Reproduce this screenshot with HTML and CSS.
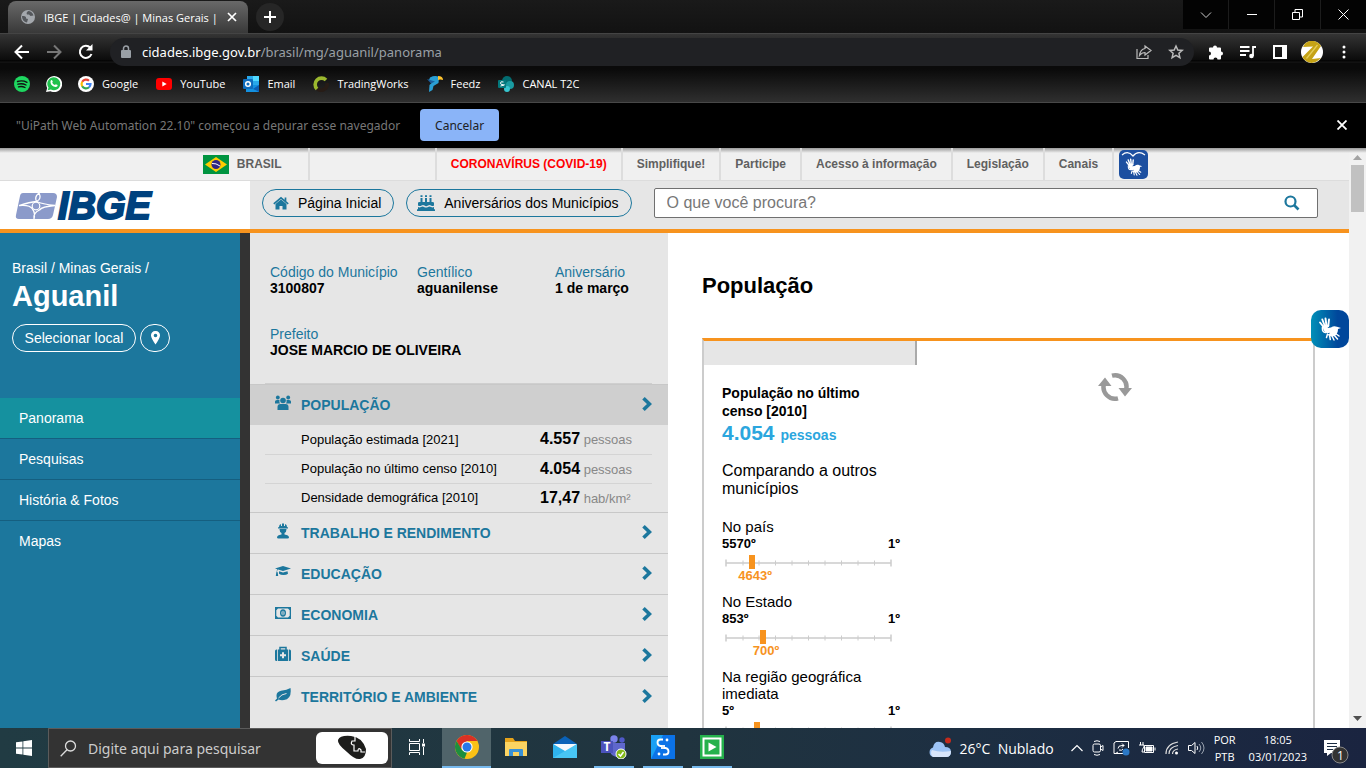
FILE: index.html
```html
<!DOCTYPE html>
<html lang="pt-BR">
<head>
<meta charset="utf-8">
<title>IBGE | Cidades@ | Minas Gerais | Aguanil</title>
<link rel="stylesheet" href="styles.css">
</head>
<body>
<svg class="defs" aria-hidden="true">
  <symbol id="hands" viewBox="0 0 24 24">
    <g fill="none" stroke="currentColor" stroke-linecap="round" stroke-linejoin="round">
      <path stroke-width="1.900" d="M6 10.500 2 5.500M7 9.500 4.300 2.500M8.500 9 7.500 1.500M10.300 9 11 2.500"/>
      <path stroke-width="1.500" d="M4.500 10C4 14 5.500 16 8 15.500M14 19l2 4M11.500 18l.8 4.500M16 18l3.500 4M17.500 16.500l3.500 2.500M9.500 17 8.500 20.500"/>
    </g>
    <path fill="currentColor" d="M5 10.500C6 8.500 9 7.800 11.500 8.500l-2 2.500 3.500-.5c2-1.500 4-1.800 6-.7l4 1.200-3 1c0 3-1 5.500-3.500 7-2.500 1-5.500 0-7.500-1.500 1.500-.2 2.500-.8 3-1.800-2 .8-4 .3-5-.8C5.500 13.500 5 12 5 10.500Z"/>
  </symbol>
  <symbol id="chev" viewBox="0 0 10 14"><path d="m1.500 1.300 6 5.700-6 5.700" fill="none" stroke="currentColor" stroke-width="3.600"/></symbol>
  <symbol id="scale" viewBox="0 0 167 14"><path d="M1 8h165M1 4.500v7M166 4.500v7" stroke="#ccc" stroke-width="1.500" fill="none"/><path d="M18 5.500v5M34 5.500v5M50.500 5.500v5M67 5.500v5M83.500 5.500v5M100 5.500v5M116.500 5.500v5M133 5.500v5M149.500 5.500v5" stroke="#ccc"/></symbol>
</svg>

<header class="browser">
  <div class="tabstrip">
    <div class="tab">
      <svg width="16" height="16" viewBox="0 0 16 16"><circle cx="8" cy="8" r="7" fill="#a4a8ad"/><path d="M2 7c3 0 4.500.5 4 2.500l2 .5-1 3.500C4 13 2 10.500 2 7ZM8 2c2.500 0 5 2 5.500 4.500l-3 .5-1.500-1.500H7L6.500 4Z" fill="#55585c"/></svg>
      <span class="tab-title">IBGE | Cidades@ | Minas Gerais |</span>
      <button class="ico" aria-label="Fechar guia"><svg width="10" height="10" viewBox="0 0 10 10"><path d="m1 1 8 8M9 1 1 9" stroke="#fff" stroke-width="1.700"/></svg></button>
    </div>
    <button class="newtab" aria-label="Nova guia"><svg width="12" height="12" viewBox="0 0 12 12"><path d="M6 0v12M0 6h12" stroke="#fff" stroke-width="2"/></svg></button>
    <div class="winbtns">
      <button aria-label="Pesquisar guias"><svg width="12" height="8" viewBox="0 0 12 8"><path d="m1 1.500 5 5 5-5" fill="none" stroke="#ccc"/></svg></button>
      <button aria-label="Minimizar"><svg width="10" height="10" viewBox="0 0 10 10"><path d="M0 4.500h10" stroke="#fff"/></svg></button>
      <button aria-label="Restaurar"><svg width="11" height="11" viewBox="0 0 11 11"><path d="M.5 3.500h7v7h-7zM3 3V.5h7.500V8H8" fill="none" stroke="#fff"/></svg></button>
      <button aria-label="Fechar"><svg width="11" height="11" viewBox="0 0 11 11"><path d="m.5.5 10 10M10.500.5l-10 10" stroke="#fff"/></svg></button>
    </div>
  </div>
  <div class="toolbar">
    <button class="ico" aria-label="Voltar"><svg width="16" height="16" viewBox="0 0 16 16"><path d="M15 8H2M8 1.500 1.500 8 8 14.500" fill="none" stroke="#fff" stroke-width="2"/></svg></button>
    <button class="ico" aria-label="Avançar"><svg width="16" height="16" viewBox="0 0 16 16"><path d="M1 8h13M8 1.500 14.500 8 8 14.500" fill="none" stroke="#777" stroke-width="2"/></svg></button>
    <button class="ico" aria-label="Recarregar"><svg width="16" height="16" viewBox="0 0 16 16"><path d="M13.500 10A6 6 0 1 1 12.300 3.800" fill="none" stroke="#fff" stroke-width="2"/><path d="M14.500 0v6.500H8Z" fill="#fff"/></svg></button>
    <div class="omnibox">
      <svg width="10" height="14" viewBox="0 0 10 14"><path d="M1 5h8q1 0 1 1v6q0 1-1 1H1q-1 0-1-1V6q0-1 1-1Z" fill="#9aa0a6"/><path d="M2.500 5.500V3.500a2.500 2.500 0 0 1 5 0v2" fill="none" stroke="#9aa0a6" stroke-width="1.500"/></svg>
      <span class="url"><b>cidades.ibge.gov.br</b>/brasil/mg/aguanil/panorama</span>
      <button class="ico" aria-label="Compartilhar"><svg width="16" height="16" viewBox="0 0 16 16"><path d="M1 5v9.500h11V11M9 2l6 4.500L9 11V8.500C6 8.500 5 9.500 3.500 11.500 4 7.500 6 5 9 4.500Z" fill="none" stroke="#bbb" stroke-width="1.200"/></svg></button>
      <button class="ico" aria-label="Favoritar"><svg width="16" height="16" viewBox="0 0 16 16"><path d="m8 2 1.800 4 4.400.4-3.300 2.900 1 4.300L8 11.300l-3.900 2.300 1-4.300L1.800 6.400 6.200 6Z" fill="none" stroke="#bbb" stroke-width="1.500"/></svg></button>
    </div>
    <div class="tools">
      <button class="ico" aria-label="Extensões"><svg width="16" height="16" viewBox="0 0 16 16"><path d="M1 4.500q0-1 1-1h3a2 2 0 1 1 4 0h3q1 0 1 1v3a2 2 0 1 1 0 4v3q0 1-1 1H9.500a2 2 0 0 0-4 0H2q-1 0-1-1v-3a2 2 0 0 0 0-4Z" fill="#fff"/></svg></button>
      <button class="ico" aria-label="Mídia"><svg width="16" height="16" viewBox="0 0 16 16"><path d="M0 3h9.500M0 7h9.500M0 11h6M13 12V3h3" fill="none" stroke="#fff" stroke-width="1.800"/><circle cx="11.500" cy="12" r="2.300" fill="#fff"/></svg></button>
      <button class="ico" aria-label="Painel lateral"><svg width="14" height="14" viewBox="0 0 14 14"><path d="M0 0h14v14H0Zm2 2v10h7V2Z" fill="#fff" fill-rule="evenodd"/></svg></button>
      <button class="ico" aria-label="Perfil"><svg width="22" height="22" viewBox="0 0 22 22"><circle cx="11" cy="11" r="11" fill="#fff"/><path d="M4 2.500Q11-3 18 2.500L20 5 11 18l9-1Q11 26 3 18.500L1.500 16 12 5.500 2 6Z" fill="#c5a316"/><path d="M16.500 4 5.500 17.500" stroke="#e6cf5a" stroke-width="1.200"/></svg></button>
      <button class="ico" aria-label="Menu"><svg width="16" height="16" viewBox="0 0 16 16" fill="#fff"><circle cx="8" cy="3" r="1.500"/><circle cx="8" cy="8" r="1.500"/><circle cx="8" cy="13" r="1.500"/></svg></button>
    </div>
  </div>
  <nav class="bookmarks">
    <a href="#" aria-label="Spotify"><svg width="16" height="16" viewBox="0 0 16 16"><circle cx="8" cy="8" r="8" fill="#1ed760"/><path d="M3.500 5.500q5-1.500 9.500.8M4 8.200q4.200-1.200 8 .8M4.500 10.800q3.500-1 6.500.7" fill="none" stroke="#111" stroke-width="1.400" stroke-linecap="round"/></svg></a>
    <a href="#" aria-label="WhatsApp"><svg width="16" height="16" viewBox="0 0 16 16"><path d="m0 16 1.200-4A8 8 0 1 1 4.500 15.200Z" fill="#fff"/><path d="m1.700 14.300.8-2.700a6.500 6.500 0 1 1 2.300 2Z" fill="#1fc14d"/><path d="M5 4.200q1-.5 1.500.8l.3.800-.6.900q1 1.800 2.700 2.400l.9-.9 1.900.9q0 2-2 2Q5 10.300 4.500 6.500 4.300 5 5 4.200Z" fill="#fff"/></svg></a>
    <a href="#"><svg width="16" height="16" viewBox="0 0 16 16"><circle cx="8" cy="8" r="8" fill="#fff"/><g fill="none" stroke-width="2.200"><path d="M11 4.700A4.400 4.400 0 0 0 4.200 5.800" stroke="#ea4335"/><path d="M4.200 5.700a4.400 4.400 0 0 0 0 4.600" stroke="#fbbc05"/><path d="M4.200 10.200A4.400 4.400 0 0 0 11 11.300" stroke="#34a853"/><path d="M11 11.300Q12.500 10 12.500 8H8" stroke="#4285f4"/></g></svg><span>Google</span></a>
    <a href="#"><svg width="16" height="16" viewBox="0 0 16 16"><rect y="2" width="16" height="12" rx="3" fill="#f00"/><path d="m6.300 5.500 4.400 2.500-4.400 2.500Z" fill="#fff"/></svg><span>YouTube</span></a>
    <a href="#"><svg width="16" height="16" viewBox="0 0 16 16"><path d="M4 0h12v9H4Z" fill="#28a8ea"/><path d="M10 0h6v5h-6Z" fill="#50d9ff"/><path d="M3 9h13v7H3Z" fill="#1490df"/><path d="m3 9 7 4 6-4v7Z" fill="#0a5eb5"/><rect y="3" width="10" height="10" rx="1" fill="#0f6cbd"/><circle cx="5" cy="8" r="2.300" fill="none" stroke="#fff" stroke-width="1.500"/></svg><span>Email</span></a>
    <a href="#"><svg width="16" height="16" viewBox="0 0 16 16" fill="none" stroke-width="3.600"><path d="M14 7a6 6 0 0 1-10 5.500" stroke="#271c16"/><path d="M4 13A6.200 6.200 0 0 1 13 4" stroke="#9bb82e"/></svg><span>TradingWorks</span></a>
    <a href="#"><svg width="16" height="16" viewBox="0 0 16 16"><path d="M3 1.500Q8-1 12 1l-.5 6-5 3-1 4L2 16l.5-7L5 6.500 2 4Z" fill="#2a9fd4"/><path d="m0 3 8 2.500-4 2Z" fill="#1a5f9e"/><path d="M11 0q5 0 5 4-3-1-5 0Z" fill="#ffc42e"/></svg><span>Feedz</span></a>
    <a href="#"><svg width="16" height="16" viewBox="0 0 16 16"><circle cx="9" cy="5" r="5" fill="#036c70"/><circle cx="12" cy="9" r="4" fill="#1a9ba1"/><circle cx="9" cy="13" r="3" fill="#37c6d0"/><rect y="4" width="8" height="8" rx="1" fill="#03787c"/><path d="M5.500 6Q2.500 5 2.500 7t3 1.800T2.500 10" fill="none" stroke="#fff"/></svg><span>CANAL T2C</span></a>
  </nav>
  <div class="infobar">
    <span>"UiPath Web Automation 22.10" começou a depurar esse navegador</span>
    <button class="cancel">Cancelar</button>
    <button class="ico close" aria-label="Fechar aviso"><svg width="10" height="10" viewBox="0 0 10 10"><path d="m.5.5 9 9M9.500.5l-9 9" stroke="#fff" stroke-width="1.800"/></svg></button>
  </div>
</header>

<div class="viewport">
  <div class="page">
    <nav class="govbar">
      <a class="brasil" href="#"><svg width="26" height="19" viewBox="0 0 26 19"><path fill="#009440" d="M0 0h26v19H0z"/><path d="m13 2 11 7.500L13 17 2 9.500Z" fill="#ffcb00"/><circle cx="13" cy="9.500" r="4.500" fill="#302681"/><path d="M9 8.500q4-.5 8 2.500" stroke="#fff" fill="none"/></svg>BRASIL</a>
      <span class="blank"></span>
      <a class="covid" href="#">CORONAVÍRUS (COVID-19)</a>
      <a href="#">Simplifique!</a>
      <a href="#">Participe</a>
      <a href="#">Acesso à informação</a>
      <a href="#">Legislação</a>
      <a href="#">Canais</a>
      <a class="libras" href="#" aria-label="VLibras"><span><svg width="29" height="29" viewBox="0 0 29 29"><path d="M3 5q6-5 11 1 5-6 12-1" fill="none" stroke="#fff" stroke-width="1.200"/><use href="#hands" x="6" y="8" width="18" height="18"/></svg></span></a>
    </nav>
    <header class="sitehead">
      <a class="logo" href="#"><svg width="43" height="28" viewBox="0 0 43 28"><path d="M8 1h30q4 0 4 4l-4 18q-1 4-5 4H4q-4 0-3-4L5 4q.5-3 3-3Z" fill="#8b9aca"/><path d="M24 1Q19 5 21.500 9.500 27 12 40 13.500 27 14.500 24.500 18 18 21 19 27M24 1q3 6-2.500 8.500Q15 10 4 13.500q11-1 13.500 3.500 3 4 1.500 10" fill="none" stroke="#fff" stroke-width="1.300"/><circle cx="21" cy="14" r="3.800" fill="#8b9aca" stroke="#fff" stroke-width="1.200"/></svg><span>IBGE</span></a>
      <div class="headtools">
        <a class="pill" href="#"><svg width="16" height="16" viewBox="0 0 16 16" fill="currentColor"><path d="M8 4.500 13.500 9v5.500H9.500V11h-3v3.500h-4V9Z"/><path d="M.8 8.800 8 2.800l7.200 6M12.500 2.500v4" fill="none" stroke="currentColor" stroke-width="1.700"/></svg>Página Inicial</a>
        <a class="pill" href="#"><svg width="18" height="16" viewBox="0 0 18 16" fill="currentColor"><path d="M1 8q0-1 1.500-1h13Q17 7 17 8v2.500q-1.500 1-3 0-1.500-1-3 0-2 1.300-3.500 0-1.500-1-3 0T1 10.500ZM1 12q1.500.8 3 0 1.800-1 3 0 2 1.200 4 0 1.500-1 3 0 1.500.8 3 0v3.500H1Z"/><path d="M0 15.300h18M4.500 7.500V3M9 7.500V3M13.500 7.500V3M4.500 2V.3M9 2V.3M13.500 2V.3" stroke="currentColor" stroke-width="2"/></svg>Aniversários dos Municípios</a>
        <form class="search"><input type="search" placeholder="O que você procura?" aria-label="O que você procura?"><button type="button" aria-label="Buscar"><svg width="16" height="16" viewBox="0 0 16 16"><circle cx="6.500" cy="6.500" r="5" fill="none" stroke="currentColor" stroke-width="2.200"/><path d="m10 10 4.500 4.500" stroke="currentColor" stroke-width="2.600"/></svg></button></form>
      </div>
    </header>
    <div class="columns">
      <aside class="side">
        <div class="place">
          <p>Brasil / Minas Gerais /</p>
          <h1>Aguanil</h1>
          <div class="placebtns"><button>Selecionar local</button><button class="pin" aria-label="Localização"><svg width="9" height="14" viewBox="0 0 9 14"><path d="M4.500 0A4.300 4.300 0 0 1 9 4.500Q9 7 4.500 13.500 0 7 0 4.500A4.300 4.300 0 0 1 4.500 0Zm0 2.700a1.800 1.800 0 1 0 0 3.600 1.800 1.800 0 0 0 0-3.600Z" fill="#fff"/></svg></button></div>
        </div>
        <nav><a class="on" href="#">Panorama</a><a href="#">Pesquisas</a><a href="#">História &amp; Fotos</a><a href="#">Mapas</a></nav>
      </aside>
      <section class="panel">
        <dl class="facts">
          <div><dt>Código do Município</dt><dd>3100807</dd></div>
          <div><dt>Gentílico</dt><dd>aguanilense</dd></div>
          <div><dt>Aniversário</dt><dd>1 de março</dd></div>
          <div class="wide"><dt>Prefeito</dt><dd>JOSE MARCIO DE OLIVEIRA</dd></div>
        </dl>
        <button class="topic open"><svg width="16" height="16" viewBox="0 0 16 16" fill="currentColor"><circle cx="8" cy="5.500" r="2.800"/><path d="M2.500 15v-3q0-3 3-3h5q3 0 3 3v3Z"/><circle cx="2.800" cy="2.500" r="1.900"/><circle cx="13.200" cy="2.500" r="1.900"/><path d="M0 8.500V6.500Q0 5 2 5h2.500q-.5 2 .5 3.500ZM16 8.500V6.500Q16 5 14 5h-2.500q.5 2-.5 3.500Z"/></svg><span>POPULAÇÃO</span><svg class="chev"><use href="#chev"/></svg></button>
        <table class="stats">
          <tr><th scope="row">População estimada [2021]</th><td><b>4.557</b> pessoas</td></tr>
          <tr><th scope="row">População no último censo [2010]</th><td><b>4.054</b> pessoas</td></tr>
          <tr><th scope="row">Densidade demográfica [2010]</th><td><b>17,47</b> hab/km²</td></tr>
        </table>
        <button class="topic"><svg width="16" height="16" viewBox="0 0 16 16" fill="currentColor"><path d="M4 4q0-2.500 2-3v2h1V.5h2V3h1V1q2 .5 2 3l1 .5v1H3v-1ZM4.500 6h7q0 3-2 4v1.500q4.500.500 4.500 3 0 1-1.500 1h-9Q2 15.500 2 14.500q0-2.500 4.500-3V10q-2-1-2-4Z"/></svg><span>TRABALHO E RENDIMENTO</span><svg class="chev"><use href="#chev"/></svg></button>
        <button class="topic"><svg width="16" height="16" viewBox="0 0 16 16" fill="currentColor"><path d="m8 2 8 2.500L8 7 3 5.500q-1 .8-1 2l.7 1L3.200 12H.8l.5-3.500.4-1q0-1.500.7-2.300L0 4.500ZM4 7.300 8 8.500l4.500-1.300.5 2.500Q11.500 11 8.500 11T4 9.700Z"/></svg><span>EDUCAÇÃO</span><svg class="chev"><use href="#chev"/></svg></button>
        <button class="topic"><svg width="16" height="16" viewBox="0 0 16 16"><path d="M0 2h16v12H0Zm3 1.500L1.300 5.200v5.600L3 12.500h10l1.700-1.700V5.200L13 3.500Z" fill="currentColor" fill-rule="evenodd"/><ellipse cx="8" cy="8" rx="2.300" ry="3" fill="none" stroke="currentColor" stroke-width="1.400"/><path d="M8 6v4" stroke="currentColor"/></svg><span>ECONOMIA</span><svg class="chev"><use href="#chev"/></svg></button>
        <button class="topic"><svg width="16" height="16" viewBox="0 0 16 16"><path d="M5 4V1.500h6V4" fill="none" stroke="currentColor" stroke-width="1.500"/><path d="M0 5q0-1.500 1.500-1.500h.7v11.500h-.7Q0 15 0 13.500ZM3 3.500h10V15H3ZM16 5q0-1.500-1.500-1.500h-.7V15h.7q1.500 0 1.500-1.500Z" fill="currentColor"/><path d="M8 6.200v6M5 9.200h6" stroke="#e6e6e6" stroke-width="2"/></svg><span>SAÚDE</span><svg class="chev"><use href="#chev"/></svg></button>
        <button class="topic"><svg width="16" height="16" viewBox="0 0 16 16"><path d="M15.500 1q1.500 11-6.500 12-3 .5-5.500-.5L1 14.500l-1-1 2-2Q0 5 6 3.800q6-.5 9.500-2.800Z" fill="currentColor"/><path d="M3.500 11q3-4 8-4.500" fill="none" stroke="#e6e6e6"/></svg><span>TERRITÓRIO E AMBIENTE</span><svg class="chev"><use href="#chev"/></svg></button>
      </section>
      <main class="main">
        <h2>População</h2>
        <div class="card">
          <div class="ranks">
            <div class="strip"></div>
            <div class="rankbody">
              <h3>População no último censo [2010]</h3>
              <p class="total">4.054 <small>pessoas</small></p>
              <p class="compare">Comparando a outros municípios</p>
              <div class="rank"><p>No país</p><div class="ends"><span>5570º</span><span>1º</span></div><div class="track"><svg><use href="#scale"/></svg><i style="left:16.2%"><em>4643º</em></i></div></div>
              <div class="rank"><p>No Estado</p><div class="ends"><span>853º</span><span>1º</span></div><div class="track"><svg><use href="#scale"/></svg><i style="left:22.8%"><em>700º</em></i></div></div>
              <div class="rank"><p>Na região geográfica imediata</p><div class="ends"><span>5º</span><span>1º</span></div><div class="track"><svg><use href="#scale"/></svg><i style="left:19.2%"></i></div></div>
            </div>
          </div>
          <div class="chart"><svg width="34" height="30" viewBox="0 0 34 30"><g fill="none" stroke="#999" stroke-width="4.500"><path d="M20 26.300A11.500 11.500 0 0 1 6 12"/><path d="M14 3.700A11.500 11.500 0 0 1 28 18"/></g><path d="m0 14 7-8.500 6.500 8.500ZM34 16l-7 8.500-6.500-8.500Z" fill="#999"/></svg></div>
        </div>
      </main>
    </div>
    <button class="vlibras" aria-label="Acessível em Libras"><svg width="24" height="24"><use href="#hands"/></svg></button>
  </div>
  <div class="scrollbar" aria-hidden="true"><svg width="9" height="5" viewBox="0 0 9 5"><path d="m0 5 4.500-5L9 5Z" fill="#a3a3a3"/></svg><div class="thumb"></div><svg width="9" height="5" viewBox="0 0 9 5"><path d="m0 0 4.500 5L9 0Z" fill="#505050"/></svg></div>
</div>

<footer class="taskbar">
  <button class="start" aria-label="Iniciar"><svg width="16" height="16" viewBox="0 0 16 16"><path d="m0 2.300 6.500-.9v6.100H0ZM7.300 1.300 16 0v7.500H7.300ZM0 8.400h6.500v6.200L0 13.700ZM7.300 8.400H16V16l-8.700-1.300Z" fill="#fff"/></svg></button>
  <label class="tasksearch"><svg width="17" height="17" viewBox="0 0 17 17"><circle cx="10.500" cy="6" r="5" fill="none" stroke="#ddd" stroke-width="1.300"/><path d="M7 9.800.7 16.200" stroke="#ddd" stroke-width="1.300"/></svg><input type="text" placeholder="Digite aqui para pesquisar"><span class="doodle"><svg width="30" height="26" viewBox="0 0 30 26"><path d="M1 5Q3 0 14 1t15 13q0 9-6 10Q18 25 10 17 0 9 1 5Z" fill="#1d1d1b"/><path d="M18 0v6h-3q-2 4 2 4v6h4q0-4 3-1v2h4" fill="none" stroke="#fff" stroke-width="1.200"/></svg></span></label>
  <button class="app view" aria-label="Visão de tarefas"><svg width="17" height="16" viewBox="0 0 17 16" fill="none" stroke="#fff"><path d="M.5 0v2.500h10V0M.5 16v-2.500h10V16M.5 4.500h10v7H.5ZM14.500 0v4M14.500 8v8"/><path d="M13 6h3" stroke-width="3"/></svg></button>
  <button class="app active" aria-label="Chrome"><svg width="24" height="24" viewBox="0 0 24 24"><circle cx="12" cy="12" r="12" fill="#fbc116"/><path d="M1.600 6A12 12 0 0 1 22.400 6H12L6 14Z" fill="#d93025"/><path d="M1.600 6 7 15l5 2.500L9.500 23.700A12 12 0 0 1 1.600 6Z" fill="#1e8e3e"/><circle cx="12" cy="12" r="5.600" fill="#fff"/><circle cx="12" cy="12" r="4.500" fill="#2878e8"/></svg></button>
  <button class="app" aria-label="Explorador"><svg width="22" height="19" viewBox="0 0 22 19"><path d="M0 0h8l2 3h12v14H0Z" fill="#e6a31b"/><path d="M0 4h22v14H0Z" fill="#fcd462"/><path d="M4 18v-6q0-1 1-1h12q1 0 1 1v6h-4v-4H8v4Z" fill="#3991d6"/></svg></button>
  <button class="app" aria-label="Email"><svg width="24" height="22" viewBox="0 0 24 22"><path d="m0 8 12-8 12 8v14H0Z" fill="#0a62b8"/><path d="M0 8h24l-12 9Z" fill="#f4f8fc"/><path d="m0 8 24 14H0Z" fill="#2fb3ee"/><path d="m24 8-24 14h24Z" fill="#48c6f5"/></svg></button>
  <button class="app run" aria-label="Teams"><svg width="26" height="24" viewBox="0 0 26 24"><circle cx="13" cy="4" r="3.700" fill="#7b83eb"/><circle cx="21" cy="5" r="2.700" fill="#5059c9"/><path d="M9 8h15v8q0 5-6 6-8 0-9-6Z" fill="#5f67cc"/><path d="M0 6h12v12H0Z" fill="#4b53bc"/><text x="2.500" y="16" class="teams-t">T</text><circle cx="20" cy="19" r="5" fill="#82b817" stroke="#fff"/><path d="m17.500 19 2 2 3-4" fill="none" stroke="#fff" stroke-width="1.500"/></svg></button>
  <button class="app run" aria-label="Automação"><svg width="24" height="24" viewBox="0 0 24 24"><path fill="#0b72e7" d="M0 0h24v24H0z"/><path fill="#1aa0f4" d="M0 0h12L0 24z"/><path d="M12 4.500H9.500Q6.500 4.500 6.500 7.500t3 3.500h1.500v3M12 19.500h2.500q3 0 3-3t-3-3.500H13V10" fill="none" stroke="#fff" stroke-width="1.800"/><circle cx="16" cy="5" r="1.400" fill="#fff"/><circle cx="8" cy="19" r="1.400" fill="#fff"/></svg></button>
  <button class="app run" aria-label="Assistente"><svg width="24" height="24" viewBox="0 0 24 24"><path fill="#25b14c" d="M0 0h24v24H0z"/><path d="M3.500 3.500h17v17h-17z" fill="none" stroke="#fff" stroke-width="2"/><path d="m8.500 7.500 8 4.500-8 4.500Z" fill="#fff"/></svg></button>
  <div class="tray">
    <svg width="26" height="22" viewBox="0 0 26 22"><path d="M6 20a5 5 0 0 1 0-9.500Q7 4 13 5q4 .5 5 5 6 0 6 5 0 5-5 5Z" fill="#9cc3f5"/><path d="M6 20a5 5 0 0 1-1-7q8 3 19 1 0 6-5 6Z" fill="#d7e5fb"/><circle cx="21" cy="3.500" r="3" fill="#c42b1c"/></svg>
    <span class="weather">26°C&nbsp; Nublado</span>
    <svg width="12" height="8" viewBox="0 0 12 8"><path d="m.5 7 5.500-5.500L11.500 7" fill="none" stroke="#fff" stroke-width="1.200"/></svg>
    <svg width="12" height="16" viewBox="0 0 12 16" fill="none" stroke="#fff"><rect x="1" y="4" width="7.500" height="8" rx="1.500"/><path d="m8.500 7 2.500-1.500v5L8.500 9M2 1.500q3-1.500 6 0M2 14.500q3 1.500 6 0"/></svg>
    <svg width="17" height="16" viewBox="0 0 17 16" fill="none" stroke="#fff"><path d="M10 13.500H1V3l2-1.500h12.500V8M5 12l-2.500 1.500M5 8.500q0-3 4-3h2M9 3.500l2 2-2 2M10 9q-1 2-4 1"/><circle cx="13" cy="12" r="3.500" fill="#2b78c5" stroke="none"/></svg>
    <svg width="17" height="12" viewBox="0 0 17 12" fill="none" stroke="#fff"><path d="M5.500 3.500h9v7h-9zM16 5.500v3M1.500 0v3M4 0v3M0 3h5v2q-2 2-2 5h2"/><path fill="#fff" d="M7 5h6v4H7z"/></svg>
    <svg width="14" height="14" viewBox="0 0 14 14" fill="none" stroke="#ddd" stroke-width="1.200"><path d="M1 13Q1 3 13 1M4 13q0-7 9-8.500M7.500 13q0-4 5.500-5"/><circle cx="11.500" cy="12" r="1.500" fill="#fff" stroke="none"/></svg>
    <svg width="17" height="14" viewBox="0 0 17 14" fill="none" stroke="#fff"><path d="M.5 4.500h3L7 1.500v11L3.500 9.500h-3ZM9 5q1.500 2 0 4"/><path d="M11 3q3.500 4 0 8M13.500 1q5 6 0 12" stroke="#9aa3b0"/></svg>
    <span class="two">POR<br>PTB</span>
    <span class="two clock">18:05<br>03/01/2023</span>
    <button class="ico notes" aria-label="Notificações"><svg width="26" height="26" viewBox="0 0 26 26"><path d="M1 2h16v13h-9l-4 3v-3H1Z" fill="#fff"/><path d="M4 5.500h10M4 8.500h10M4 11.500h6" stroke="#1b2c42"/><circle cx="17" cy="17" r="8" fill="#333" stroke="#888"/><text x="14" y="22" class="count">1</text></svg></button>
  </div>
</footer>
</body>
</html>
```
FILE: styles.css
```css
* { box-sizing: border-box; }
body, p, h1, h2, h3, dl, dd { margin: 0; }
body {
  display: flex;
  flex-direction: column;
  height: 100vh;
  overflow: hidden;
  font: 14px "Liberation Sans", Arial, sans-serif;
  color: #000;
}
a { color: inherit; text-decoration: none; }
button { padding: 0; border: 0; background: none; color: inherit; font: inherit; }
svg { display: block; flex: none; }
.defs { position: absolute; width: 0; height: 0; }
.ico { display: flex; align-items: center; justify-content: center; }

/* Browser chrome */
.browser { flex: none; font-family: "Open Sans", sans-serif; font-size: 12px; color: #fff; background: #000; }
.tabstrip { display: flex; height: 33px; padding-left: 8px; background: linear-gradient(#1a1a1a, #121212); }
.tab {
  display: flex;
  align-items: center;
  width: 240px;
  margin-top: 1px;
  padding: 0 11px 0 12px;
  gap: 8px;
  border-radius: 8px 8px 0 0;
  background: linear-gradient(#696969, #393939);
}
.tab-title { flex: 1; overflow: hidden; white-space: nowrap; font-size: 11px; }
.newtab { display: flex; align-items: center; justify-content: center; width: 28px; height: 28px; margin: 3px 0 0 8px; border-radius: 50%; background: #262626; }
.winbtns { display: flex; gap: 1px; height: 29px; margin-left: auto; background: #1c1c1c; }
.winbtns button { display: flex; align-items: center; justify-content: center; width: 45px; background: #030303; }
.toolbar {
  display: flex;
  align-items: center;
  height: 36px;
  padding: 0 6px 0 14px;
  gap: 16px;
  border-top: 1px solid #444;
  background: linear-gradient(#343434, #0b0b0b 26px, #000 27px, #1a1a1a 28px, #0a0a0a 29px);
}
.omnibox { display: flex; flex: 1; align-items: center; height: 28px; margin-right: -10px; padding: 0 8px 0 11px; gap: 12px; border-radius: 14px; background: #202124; }
.omnibox > svg { margin-right: -1px; }
.omnibox .ico { width: 20px; }
.url { flex: 1; font: 13px "Noto Sans", sans-serif; color: #9aa0a6; }
.url b { font-weight: 400; color: #fff; }
.tools { display: flex; align-items: center; }
.tools .ico { width: 32px; }
.bookmarks {
  display: flex;
  align-items: center;
  height: 34px;
  padding: 0 14px 4px;
  gap: 16px;
  border-bottom: 1px solid #484848;
  background: linear-gradient(#0a0a0a, #2f2f2f);
}
.bookmarks a { display: flex; align-items: center; gap: 8px; font-size: 11px; }
.bookmarks span { padding-right: 2px; }
.infobar { display: flex; align-items: center; height: 45px; padding: 0 19px 1px 16px; gap: 20px; color: #777; font-family: "Noto Sans", sans-serif; }
.cancel { width: 79px; height: 32px; border-radius: 4px; background: #8ab4f8; color: #202124; font-size: 12px; }
.close { margin-left: auto; }

/* Web page */
.viewport { display: flex; flex: 1; min-height: 0; }
.page { position: relative; display: flex; flex-direction: column; flex: 1; min-width: 0; overflow: hidden; }
.govbar {
  display: flex;
  flex: none;
  justify-content: center;
  height: 33px;
  padding-left: 2px;
  border-bottom: 1px solid #dcdcdc;
  background: linear-gradient(#999, #f0f0f0 5px);
  font-size: 12px;
  font-weight: 700;
  color: #606060;
}
.govbar > * { display: flex; align-items: center; padding: 0 14px; border-right: 2px solid #ddd; }
.govbar .brasil { width: 107px; padding: 0; gap: 8px; }
.govbar .blank { width: 127px; }
.govbar .covid { color: #f00; }
.govbar .libras { padding: 0 0 0 5px; border: 0; }
.libras span { border-radius: 5px; background: #1c4fa0; color: #fff; }
.sitehead { display: flex; flex: none; height: 52px; border-bottom: 4px solid #f7931e; background: #e6e6e6; }
.logo { display: flex; align-items: center; width: 250px; padding: 1px 0 0 15px; background: #fff; color: #00427e; }
.logo span { font-size: 38px; line-height: 40px; font-weight: 700; font-style: italic; -webkit-text-stroke: 2px #00427e; }
.headtools { display: flex; flex: 1; align-items: center; padding: 0 31px 4px 12px; gap: 12px; }
.pill { display: flex; flex: none; align-items: center; height: 28px; padding: 0 12px 0 10px; gap: 9px; border: 1px solid #1c779d; border-radius: 14px; }
.pill svg { color: #1c779d; }
.search { display: flex; flex: 1; height: 30px; margin-left: 10px; border: 1px solid #707070; border-radius: 2px; background: #fff; }
.search input { flex: 1; min-width: 0; padding: 0 12px; border: 0; background: none; font: 16px "Liberation Sans", Arial, sans-serif; }
.search input::placeholder { color: #777; }
.search button { width: 48px; padding-left: 15px; color: #1c779d; }
.columns { display: flex; flex: 1; min-height: 0; }
.side { flex: none; width: 250px; border-right: 10px solid #333; background: #1c779d; color: #fff; }
.place { height: 165px; padding: 26px 12px 0; line-height: 18px; }
.place h1 { margin-top: 1px; font-size: 29px; line-height: 36px; }
.placebtns { display: flex; gap: 4px; margin-top: 10px; }
.placebtns button { width: 124px; height: 28px; border: 1px solid #fff; border-radius: 14px; }
.placebtns .pin { display: flex; align-items: center; justify-content: center; width: 30px; }
.side nav a { display: flex; align-items: center; height: 41px; padding-left: 19px; border-bottom: 1px solid #155f80; }
.side nav a:last-child { height: 40px; border: 0; }
.side nav .on { background: #15919f; }
.panel { flex: none; width: 418px; background: #e6e6e6; }
.facts { display: grid; grid-template-columns: 147px 138px 1fr; row-gap: 30px; height: 151px; margin: 0 16px 0 15px; padding: 31px 0 0 5px; align-content: start; line-height: 16px; border-bottom: 1px solid #cfcfcf; }
.facts dt { color: #1c779d; }
.facts dd { font-weight: 700; }
.facts .wide { grid-column: 1 / -1; }
.topic { display: flex; align-items: center; width: 100%; height: 41px; padding: 0 16px 0 25px; gap: 10px; border-top: 1px solid #c8c8c8; color: #1c779d; font-weight: 700; text-align: left; }
.topic > svg { margin-bottom: 4px; }
.topic span { flex: 1; }
.topic .chev { width: 10px; height: 14px; margin-bottom: 3px; }
.topic.open { background: #cfcfcf; }
.stats { width: 387px; margin: 0 15px; border-collapse: collapse; font-size: 13px; }
.stats th, .stats td { height: 29px; padding: 0; border-bottom: 1px solid #d4d4d4; text-align: left; }
.stats tr:last-child > * { border-bottom: 0; }
.stats th { width: 275px; padding-left: 36px; font-weight: 400; }
.stats td { color: #888; }
.stats b { font-size: 16px; color: #000; }
.main { display: flex; flex: 1; flex-direction: column; min-width: 0; padding: 40px 34px 0; background: #fff; }
.main h2 { margin-bottom: 39px; font-size: 22px; line-height: 26px; }
.card { display: flex; flex: none; border: 2px solid #ccc; border-top: 3px solid #f7931e; border-bottom: 0; }
.ranks { flex: none; width: 213px; }
.strip { height: 24px; border-right: 2px solid #aaa; background: #e6e6e6; }
.rankbody { padding: 19px 17px 0 18px; }
.rankbody h3 { font-size: 14px; line-height: 18px; }
.total { color: #2ba6de; font-size: 21px; line-height: 26px; font-weight: 700; }
.total small { font-size: 14px; line-height: 14px; }
.compare { margin: 16px 0 20px; font-size: 16px; line-height: 18px; }
.rank { margin-bottom: 24px; }
.rank p { font-size: 15px; line-height: 17px; }
.ends { display: flex; justify-content: space-between; margin-bottom: 3px; font-size: 13px; line-height: 17px; font-weight: 700; }
.track { position: relative; height: 14px; margin: 0 8px 0 3px; }
.track svg { width: 100%; height: 14px; }
.track i { position: absolute; top: 0; width: 6px; height: 14px; margin-left: -3px; background: #f7931e; }
.track em { position: absolute; top: 14px; left: 100%; transform: translateX(-50%); font-size: 13px; line-height: 14px; font-style: normal; font-weight: 700; color: #f7931e; }
.chart { display: flex; flex: 1; justify-content: center; padding-top: 31px; }
.vlibras { position: absolute; top: 162px; right: 0; display: flex; align-items: center; justify-content: center; width: 38px; height: 38px; border-radius: 10px; background: linear-gradient(90deg, #0090b8, #00479b 70%); color: #fff; }
.scrollbar { display: flex; flex: none; flex-direction: column; align-items: center; width: 17px; padding: 7px 0; background: linear-gradient(#999, #f1f1f1 5px); }
.thumb { width: 13px; height: 47px; margin: 5px 0 auto; background: #c1c1c1; }

/* Taskbar */
.taskbar { display: flex; flex: none; height: 40px; background: linear-gradient(90deg, #213b43, #20343f 50%, #1d2f42 70%, #1a2440); color: #fff; font-family: "Open Sans", sans-serif; }
.start { display: flex; align-items: center; justify-content: center; width: 48px; }
.tasksearch { display: flex; align-items: center; width: 344px; padding: 0 3px 0 11px; gap: 11px; border: 1px solid #5b5b5b; background: #333; }
.tasksearch input { flex: 1; min-width: 0; padding: 0; border: 0; background: none; font: 14px "Noto Sans", sans-serif; }
.tasksearch input::placeholder { color: #ccc; }
.doodle { display: flex; align-items: center; justify-content: center; width: 72px; height: 32px; border-radius: 6px; background: #fff; }
.app { display: flex; align-items: center; justify-content: center; width: 49px; border-bottom: 2px solid transparent; }
.app.view { width: 50px; }
.app.active { border-color: #76b9ed; background: #50646a; }
.app.run { background: linear-gradient(#76b9ed, #76b9ed) center bottom / 40px 2px no-repeat border-box; }
.teams-t { font: 700 12px "Open Sans", sans-serif; fill: #fff; }
.count { font: 12px "Open Sans", sans-serif; fill: #fff; }
.tray { display: flex; align-items: center; margin-left: auto; padding-right: 17px; gap: 9px; }
.weather { margin: 0 8px 0 -2px; font-size: 14px; }
.two { font-size: 11px; line-height: 17px; text-align: center; }
.clock { margin: 0 7px 0 4px; }
.notes { padding-top: 5px; }
```
